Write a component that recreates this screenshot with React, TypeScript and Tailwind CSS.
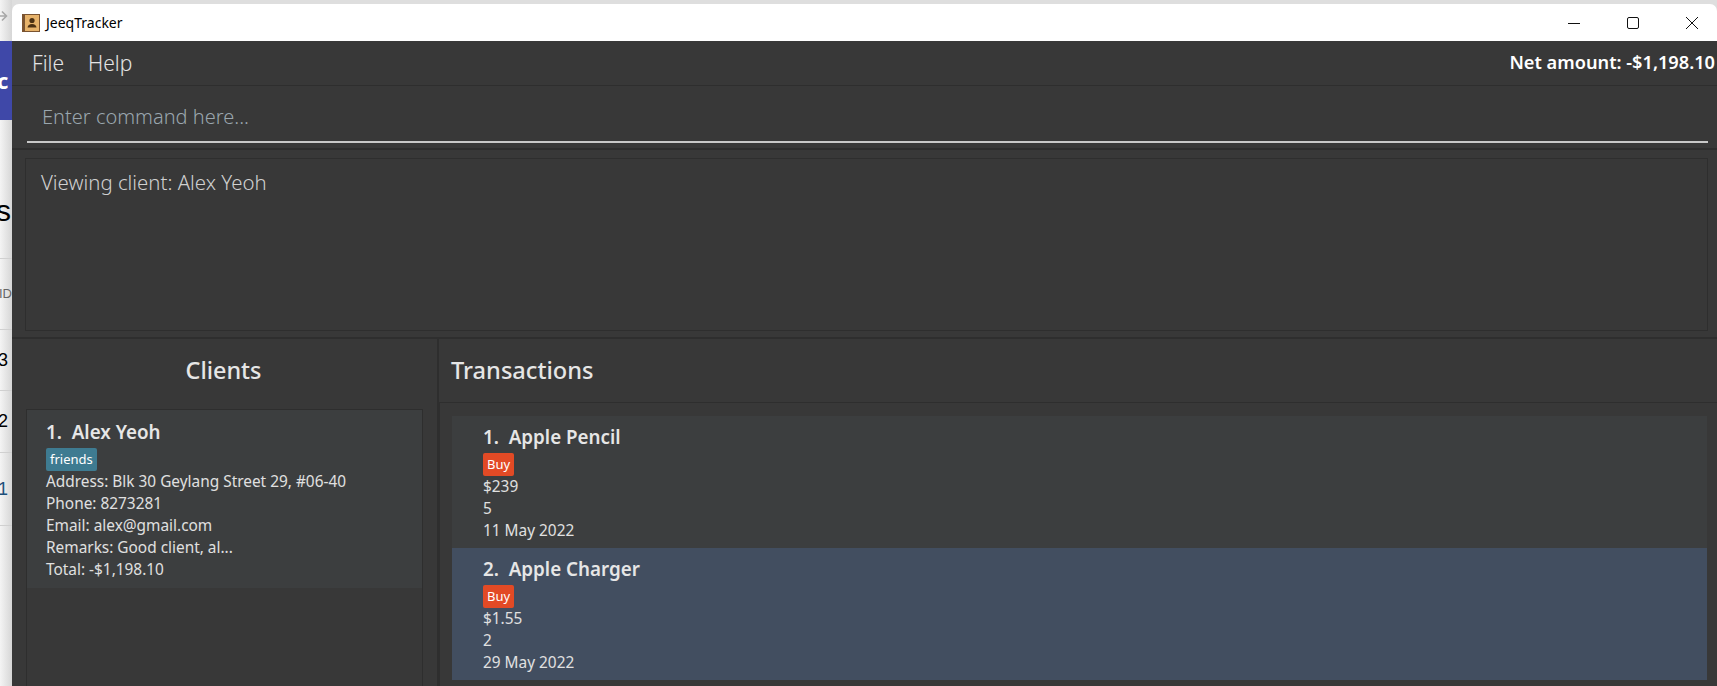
import React from "react";

const font = { fontFamily: "'Noto Sans', 'Open Sans', sans-serif" };

function TitleBar() {
  return (
    <div className="h-[37px] bg-white flex items-center rounded-t-[7px] shrink-0">
      <svg width="18" height="18" viewBox="0 0 18 18" className="ml-[10px]">
        <rect x="0" y="0" width="18" height="18" fill="#7a5330" />
        <rect x="3" y="1" width="14" height="16" fill="#e6b26a" />
        <circle cx="10" cy="6.5" r="2.6" fill="#4a2f12" />
        <path d="M5.5 13.5 Q6 10 10 10 Q14 10 14.5 13.5 Z" fill="#4a2f12" />
      </svg>
      <span className="ml-[6px] text-[14px] text-black">JeeqTracker</span>
      <div className="ml-auto flex items-center">
        <svg width="12" height="12" viewBox="0 0 12 12" className="mr-[47px]">
          <path d="M0 6.5H12" stroke="#111" strokeWidth="1" />
        </svg>
        <svg width="12" height="12" viewBox="0 0 12 12" className="mr-[47px]">
          <rect x="0.5" y="0.5" width="11" height="11" rx="1.5" fill="none" stroke="#111" strokeWidth="1" />
        </svg>
        <svg width="12" height="12" viewBox="0 0 12 12" className="mr-[19px]">
          <path d="M0 0L12 12M12 0L0 12" stroke="#111" strokeWidth="1" />
        </svg>
      </div>
    </div>
  );
}

function Tag(props: { label: string; bg: string }) {
  return (
    <div className="h-[23px] mt-[3px] flex items-center">
      <span
        className="px-[4px] h-[23px] leading-[22px] rounded-[2px] text-[13px] text-white"
        style={{ backgroundColor: props.bg }}
      >
        {props.label}
      </span>
    </div>
  );
}

function Line(props: { text: string }) {
  return <div className="h-[22px] leading-[21px] text-[15.4px] text-[#e0e0e0] whitespace-nowrap">{props.text}</div>;
}

function Name(props: { text: string }) {
  return (
    <div className="h-[26px] leading-[26px] text-[18.8px] font-semibold text-[#e6e6e6] whitespace-pre">
      {props.text}
    </div>
  );
}

function Transaction(props: { idx: number; name: string; price: string; qty: string; date: string; selected?: boolean }) {
  return (
    <div className={"h-[132px] pl-[31px] pt-[8px] " + (props.selected ? "bg-[#424e60]" : "bg-[#3c3e3f]")}>
      <Name text={props.idx + ".  " + props.name} />
      <Tag label="Buy" bg="#e24a25" />
      <Line text={props.price} />
      <Line text={props.qty} />
      <Line text={props.date} />
    </div>
  );
}

function BehindWindow() {
  return (
    <div className="w-[12px] shrink-0 flex flex-col overflow-hidden bg-linear-to-r from-[#f4f4f4] to-[#d6d6d6] text-black">
      <div className="h-[41px] shrink-0 pt-[10px]">
        <svg width="8" height="12" viewBox="0 0 8 12">
          <path d="M0 6H6M2 1.5L6.5 6L2 10.5" fill="none" stroke="#a8a8a8" strokeWidth="1.6" />
        </svg>
      </div>
      <div className="h-[79px] bg-[#3f48a8] shrink-0 text-white font-bold text-[22px] leading-[78px] -indent-[3px]">c</div>
      <div className="flex-1 flex flex-col" style={{ fontFamily: "'Liberation Sans', sans-serif" }}>
        <div className="h-[138px] pt-[72px] text-[30px] leading-[38px] -indent-[4px]">s</div>
        <div className="h-[71px] text-[13px] leading-[70px] -indent-[1px] text-[#666] border-t border-[#d0d0d0]">ID</div>
        <div className="h-[61px] text-[18px] leading-[60px] -indent-[2px] border-t border-[#d0d0d0]">3</div>
        <div className="h-[62px] text-[18px] leading-[60px] -indent-[2px] border-t border-[#d0d0d0]">2</div>
        <div className="h-[74px] text-[18px] leading-[72px] -indent-[2px] border-y border-[#d0d0d0] text-[#1d4f7a]">1</div>
      </div>
    </div>
  );
}

export default function App() {
  return (
    <div className="w-[1717px] h-[686px] overflow-hidden flex bg-[#dedede]" style={font}>
      <BehindWindow />
      <div className="flex-1 flex flex-col pt-[4px] min-w-0">
        <TitleBar />
        <div className="flex-1 flex flex-col bg-[#383838] min-h-0">
          <div className="h-[45px] shrink-0 flex items-center border-b border-[#2e2e2e] text-[21px] font-light text-[#e4e4e4]">
            <span className="ml-[20px] pt-[2px]">File</span>
            <span className="ml-[24px] pt-[2px]">Help</span>
            <span className="ml-auto mr-[2px] text-[18.2px] font-semibold text-white">Net amount: -$1,198.10</span>
          </div>
          <div className="h-[64px] shrink-0 pl-[15px] pr-[9px] border-b-2 border-[#2e2e2e]">
            <div className="h-[57px] border-b-2 border-[#c8c8c8] pl-[15px] pt-[16px] leading-[30px] text-[20px] font-light text-[#9aa6ae]">
              Enter command here...
            </div>
          </div>
          <div className="h-[189px] shrink-0 pl-[13px] pr-[9px] pt-[8px] border-b-2 border-[#2e2e2e]">
            <div className="h-[173px] border border-[#2e2e2e] pl-[15px] pt-[8px] leading-[30px] text-[20.4px] font-light text-[#d0d0d0]">
              Viewing client: Alex Yeoh
            </div>
          </div>
          <div className="flex-1 flex min-h-0">
            <div className="w-[427px] shrink-0 border-r-2 border-[#2e2e2e] flex flex-col">
              <div className="h-[63px] mb-[7px] pr-[2px] shrink-0 flex items-center justify-center text-[23.4px] text-[#e6e6e6] font-medium">
                Clients
              </div>
              <div className="flex-1 mx-[14px] border border-b-0 border-[#2e2e2e]">
                <div className="h-[178px] bg-[#3c3e3f] pl-[19px] pt-[9px]">
                  <Name text="1.  Alex Yeoh" />
                  <Tag label="friends" bg="#3e7b91" />
                  <Line text="Address: Blk 30 Geylang Street 29, #06-40" />
                  <Line text="Phone: 8273281" />
                  <Line text="Email: alex@gmail.com" />
                  <Line text="Remarks: Good client, al..." />
                  <Line text="Total: -$1,198.10" />
                </div>
              </div>
            </div>
            <div className="flex-1 flex flex-col min-w-0">
              <div className="h-[63px] shrink-0 flex items-center pl-[12px] text-[23.6px] text-[#e6e6e6] font-medium">
                Transactions
              </div>
              <div className="flex-1 border-t border-l border-[#2e2e2e] pl-[12px] pr-[10px] pt-[13px]">
                <Transaction idx={1} name="Apple Pencil" price="$239" qty="5" date="11 May 2022" />
                <Transaction idx={2} name="Apple Charger" price="$1.55" qty="2" date="29 May 2022" selected />
              </div>
            </div>
          </div>
        </div>
      </div>
    </div>
  );
}
